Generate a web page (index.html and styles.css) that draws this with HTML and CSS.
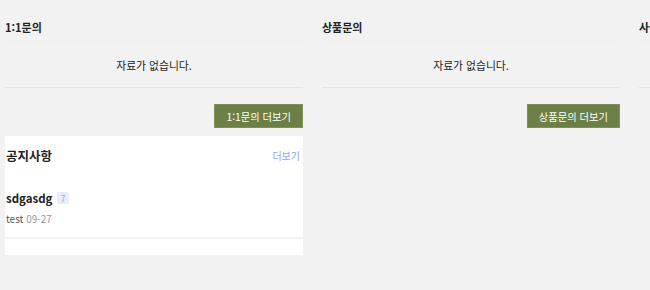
FILE: index.html
```html
<!DOCTYPE html>
<html lang="ko">
<head>
    <meta charset="UTF-8">
    <meta name="viewport" content="width=device-width, initial-scale=1.0">
    <title>문의 게시판</title>
    <link rel="stylesheet" href="styles.css">
</head>
<body>
    <div class="boards">
        <div class="board">
            <div class="board-head">1:1문의</div>
            <div class="board-empty">자료가 없습니다.</div>
            <div class="board-foot">
                <button class="more-btn">1:1문의 더보기</button>
            </div>
            <div class="notice">
                <div class="notice-head">
                    <span class="notice-title">공지사항</span>
                    <a class="notice-more" href="#">더보기</a>
                </div>
                <div class="notice-item">
                    <div class="notice-subject">sdgasdg <span class="badge">7</span></div>
                    <div class="notice-meta">test <span class="date">09-27</span></div>
                </div>
            </div>
            <div class="notice-bottom"></div>
        </div>

        <div class="board">
            <div class="board-head">상품문의</div>
            <div class="board-empty">자료가 없습니다.</div>
            <div class="board-foot">
                <button class="more-btn">상품문의 더보기</button>
            </div>
        </div>

        <div class="board">
            <div class="board-head">사용후기</div>
            <div class="board-empty">자료가 없습니다.</div>
            <div class="board-foot">
                <button class="more-btn">사용후기 더보기</button>
            </div>
        </div>
    </div>
</body>
</html>
```

FILE: styles.css
```css
body {
    margin: 0;
    background: #f2f2f2;
    font-family: "Noto Sans CJK KR", "Noto Sans", sans-serif;
    color: #222;
    overflow: hidden;
}
.boards {
    display: flex;
    gap: 19px;
    padding-left: 5px;
    padding-top: 17px;
}
.board {
    width: 298px;
    flex-shrink: 0;
}
.board-head {
    font-size: 11px;
    font-weight: bold;
    line-height: 20px;
    padding-bottom: 4px;
    border-bottom: 1px solid #efefef;
}
.board-empty {
    text-align: center;
    font-size: 10.8px;
    line-height: 20px;
    padding: 13px 0 12px;
    border-bottom: 1px solid #e4e4e4;
}
.board-foot {
    display: flex;
    justify-content: flex-end;
    padding-top: 16px;
}
.more-btn {
    background: #6b7f47;
    color: #fff;
    border: 1px solid #7f9159;
    font-family: inherit;
    font-size: 10.3px;
    height: 24px;
    padding: 0 11px;
    cursor: pointer;
}
.notice {
    background: #fff;
    margin-top: 8px;
    padding: 8px 3px 8px 1px;
    height: 85px;
}
.notice-head {
    display: flex;
    justify-content: space-between;
    align-items: center;
    height: 22px;
}
.notice-title {
    font-size: 12.5px;
    font-weight: bold;
}
.notice-more {
    color: #8ea2f2;
    font-size: 10px;
    text-decoration: none;
}
.notice-item {
    padding-top: 22px;
}
.notice-subject {
    font-size: 11.5px;
    font-weight: bold;
    line-height: 20px;
}
.badge {
    display: inline-block;
    background: #e9edfa;
    color: #8ea2f2;
    font-size: 8.5px;
    font-weight: normal;
    line-height: 12px;
    padding: 0 4px;
    margin-left: 1px;
    border-radius: 2px;
    vertical-align: 1px;
}
.notice-meta {
    font-size: 10px;
    color: #555;
    margin-top: 3px;
}
.date {
    color: #999;
}
.notice-bottom {
    background: #fff;
    height: 16px;
    margin-top: 2px;
}
```
